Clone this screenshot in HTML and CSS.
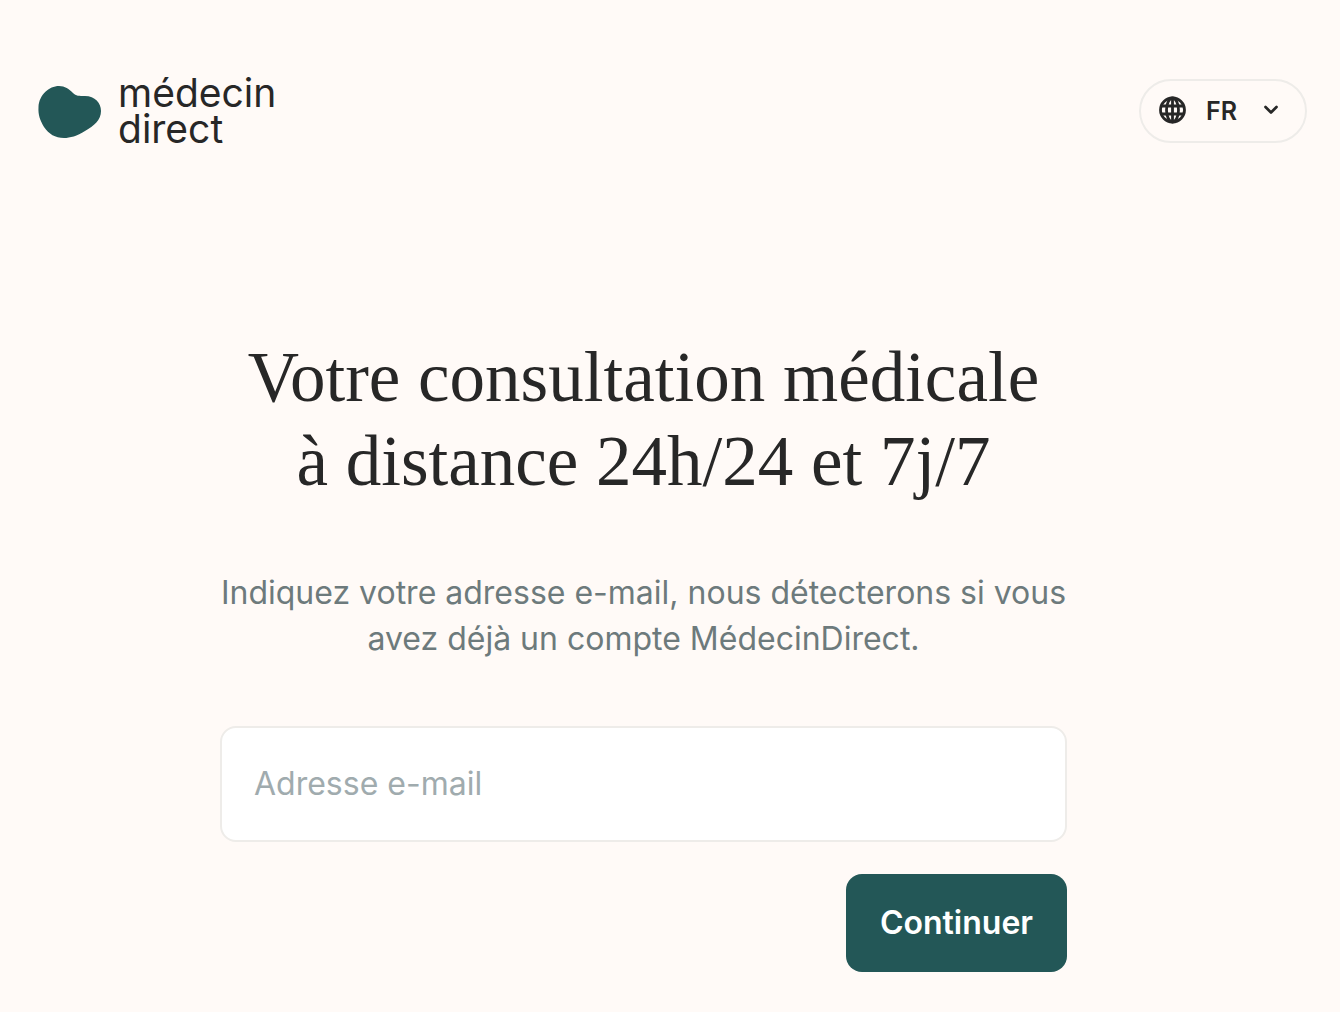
FILE: index.html
```html
<!DOCTYPE html>
<html lang="fr">
<head>
    <meta charset="UTF-8">
    <meta name="viewport" content="width=device-width, initial-scale=1.0">
    <title>MédecinDirect</title>
    <link rel="stylesheet" href="styles.css">
</head>
<body>
    <header class="header">
        <a class="logo" href="/">
            <svg class="logo-shape" viewBox="0 0 64 56" aria-hidden="true">
                <path d="M21 3C27 3 31 6 35 10C38 13 41 13 47 13C57 13 63 20 63 28C63 37 56 43 47 48C39 53 32 55 26 55C17 55 11 51 6 44C2 37 0 32 0.500 24C1 12 11 3 21 3Z" fill="#235757"/>
            </svg>
            <span class="logo-name">médecin<br>direct</span>
        </a>

        <div class="language">
            <svg class="globe" viewBox="0 0 28 28" fill="none" stroke="#272727" stroke-width="2.800" aria-hidden="true">
                <circle cx="13.500" cy="14" r="12"/>
                <ellipse cx="13.500" cy="14" rx="6" ry="12"/>
                <path d="M13.500 2.500v23M2.500 10h22M2.500 18h22"/>
            </svg>
            <select class="language-select" aria-label="Langue">
                <option>FR</option>
                <option>EN</option>
            </select>
            <svg class="chevron" viewBox="0 0 16 10" fill="none" stroke="#272727" stroke-width="2.700" stroke-linecap="round" stroke-linejoin="round" aria-hidden="true">
                <path d="M2.500 2l5.500 5.500 5.500-5.500"/>
            </svg>
        </div>
    </header>

    <main class="main">
        <div class="container">
            <h1>Votre consultation médicale <br>à distance 24h/24 et 7j/7</h1>
            <p class="intro">Indiquez votre adresse e-mail, nous détecterons si vous avez déjà un compte MédecinDirect.</p>

            <form class="form">
                <input class="email" type="email" name="email" placeholder="Adresse e-mail" aria-label="Adresse e-mail">
                <button class="submit" type="submit">Continuer</button>
            </form>
        </div>
    </main>
</body>
</html>
```

FILE: styles.css
```css
* {
    box-sizing: border-box;
}
body {
    margin: 0;
    background: #fffaf7;
    color: #272727;
    font-family: Inter, Arial, sans-serif;
}
.header {
    display: flex;
    justify-content: space-between;
    align-items: center;
    padding: 75px 33px 0 38px;
}
.logo {
    display: flex;
    align-items: center;
    gap: 16px;
    color: #272727;
    text-decoration: none;
}
.logo-shape {
    width: 64px;
    height: 56px;
}
.logo-name {
    font-size: 39px;
    line-height: 36px;
}
.language {
    position: relative;
    width: 168px;
    height: 64px;
}
.language-select {
    width: 100%;
    height: 100%;
    padding: 0 48px 0 65px;
    border: 2px solid #eeece9;
    border-radius: 32px;
    background: transparent;
    color: #272727;
    font-family: inherit;
    font-size: 25px;
    font-weight: 600;
    appearance: none;
    cursor: pointer;
}
/* icons sit over the select */
.globe,
.chevron {
    position: absolute;
    pointer-events: none;
}
.globe {
    top: 17px;
    left: 20px;
    width: 28px;
    height: 28px;
}
.chevron {
    top: 26px;
    right: 28px;
    width: 16px;
    height: 10px;
}
.main {
    padding: 188px 53px 40px 0;
}
.container {
    max-width: 847px;
    margin: 0 auto;
}
h1 {
    margin: 0 0 67px;
    font-family: "Liberation Serif", "Times New Roman", serif;
    font-size: 71px;
    font-weight: 400;
    line-height: 84px;
    text-align: center;
}
.intro {
    margin: 0 0 64px;
    color: #6d7a7c;
    font-size: 32px;
    line-height: 46px;
    text-align: center;
}
.form {
    display: flex;
    flex-direction: column;
    gap: 32px;
}
.email {
    width: 100%;
    padding: 32px;
    border: 2px solid #eeece9;
    border-radius: 16px;
    background: #fff;
    color: #272727;
    font-family: inherit;
    font-size: 32px;
    line-height: 48px;
}
.email::placeholder {
    color: #a0abae;
    opacity: 1;
}
.submit {
    align-self: flex-end;
    padding: 25px 34px;
    border: none;
    border-radius: 16px;
    background: #235757;
    color: #fff;
    font-family: inherit;
    font-size: 32px;
    font-weight: 600;
    line-height: 48px;
    cursor: pointer;
}
```
